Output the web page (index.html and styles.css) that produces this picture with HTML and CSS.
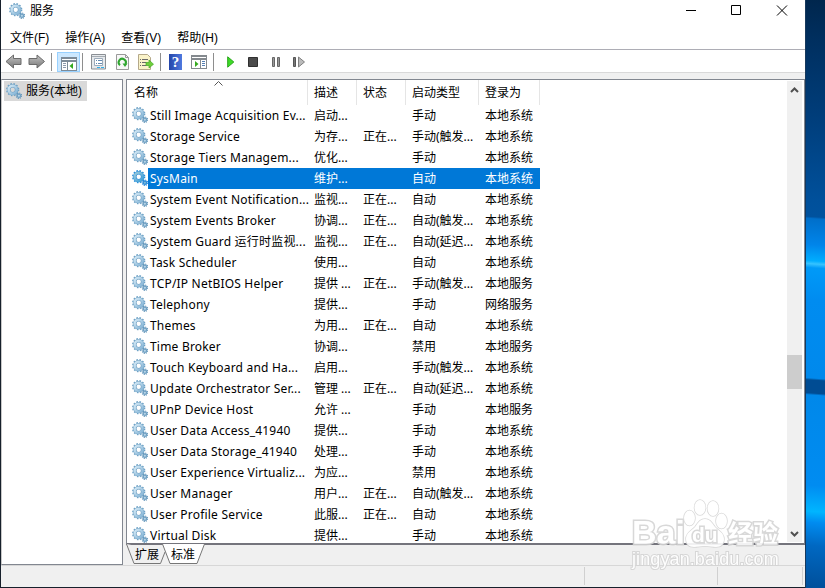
FILE: index.html
```
<!DOCTYPE html>
<html lang="zh-CN">

<head>
    <meta charset="UTF-8">
    <title>服务</title>
    <link rel="stylesheet" href="styles.css">
</head>

<body>
    <svg class="defs" width="0" height="0">
        <linearGradient id="metal" x1="0" y1="0" x2="1" y2="1">
            <stop offset="0" stop-color="#d3e9f6" />
            <stop offset="1" stop-color="#84b4d6" />
        </linearGradient>
        <linearGradient id="grey" x1="0" y1="0" x2="0" y2="1">
            <stop offset="0" stop-color="#c4c4c4" />
            <stop offset="1" stop-color="#777" />
        </linearGradient>
        <symbol id="gear" viewBox="0 0 16 16">
            <circle cx="6.7" cy="6.7" r="5.9" fill="none" stroke="#6ea3c7" stroke-width="1.5" stroke-dasharray="1.6 1.49" />
            <circle cx="6.7" cy="6.7" r="3.9" fill="none" stroke="#6f9fc1" stroke-width="3.4" />
            <circle cx="6.7" cy="6.7" r="4" fill="none" stroke="url(#metal)" stroke-width="2.500" />
            <circle cx="12.9" cy="12.7" r="2.7" fill="none" stroke="#5c90b6" stroke-width="1.1" stroke-dasharray="1.1 1.02" />
            <circle cx="12.9" cy="12.7" r="1.7" fill="#b9d6e9" stroke="#6fa0c3" stroke-width="1.3" />
        </symbol>
    </svg>

    <div class="window">
        <div class="titlebar">
            <svg class="gear"><use href="#gear" /></svg>
            <span class="title">服务</span>
            <svg class="controls" width="104" height="12" viewBox="0 0 104 12">
                <path d="M1 5.500h10M46.500 .5h9v9h-9z M92 .5l10 10M102 .5l-10 10" fill="none" stroke="#000" />
            </svg>
        </div>

        <div class="menubar">
            <span>文件(F)</span>
            <span>操作(A)</span>
            <span>查看(V)</span>
            <span>帮助(H)</span>
        </div>

        <div class="toolbar">
            <svg class="back" width="18" height="16" viewBox="0 0 18 16">
                <path d="M1 7.500 8.500 1v3.500h7.500v6H8.500V14z" fill="url(#grey)" stroke="#6b6b6b" />
            </svg>
            <svg class="forward" width="18" height="16" viewBox="0 0 18 16">
                <path d="M16.500 7.500 9 1v3.500H1v6h8V14z" fill="url(#grey)" stroke="#6b6b6b" />
            </svg>
            <i class="sep"></i>
            <span class="pressed">
                <svg width="16" height="14" viewBox="0 0 16 14">
                    <path d="M0 0h16v14H0z" fill="#7d8b98" />
                    <path d="M1 2h14v1H1zM1 5h5v8H1zM7 5h8v8H7z" fill="#fff" />
                    <path d="M2 6.500h3M2 8.500h3M2 10.500h3" stroke="#8c9aac" />
                    <path d="M12 6v6L8.500 9z" fill="#35a91f" />
                </svg>
            </span>
            <i class="sep sep-short"></i>
            <svg class="props" width="15" height="16" viewBox="0 0 15 16">
                <path d="M.5.5h14v14.500H.5z" fill="#e6e9ec" stroke="#8a8f94" />
                <path d="M1 2.500h13" stroke="#a5acb2" />
                <path d="M3.500 4.500h8v7h-8z" fill="#fff" stroke="#9cabba" />
                <path d="M5 6.500h1m1 0h4M5 9.500h1m1 0h4" stroke="#6389b1" />
                <path d="M6 13.500h3m1 0h3" stroke="#31aee8" />
            </svg>
            <svg class="refresh" width="13" height="16" viewBox="0 0 13 16">
                <path d="M.5.5h9l3 3v12H.5z" fill="#f7f7f7" stroke="#9a9a9a" />
                <path d="M9.500 .5v3h3" fill="none" stroke="#9a9a9a" />
                <path d="M4 11.200A3.600 3.600 0 1 1 9.500 10" fill="none" stroke="#2fa52f" stroke-width="2" />
                <path d="M6.500 9.500h5l-2.500 3.500z" fill="#2fa52f" />
            </svg>
            <svg class="export" width="16" height="16" viewBox="0 0 16 16">
                <path d="M.5.5h9l3 3v12H.5z" fill="#faf3c9" stroke="#b5a98a" />
                <path d="M2 5.500h1m1 0h6M2 8.500h1m1 0h4M2 11.500h1m1 0h4" stroke="#6a6a6a" />
                <path d="M8 8.500h3V6l4.500 4.200L11 14v-2.500H8z" fill="#6fce3c" stroke="#43a823" stroke-width=".7" />
            </svg>
            <i class="sep sep-mid"></i>
            <span class="help">?</span>
            <svg class="panel" width="16" height="14" viewBox="0 0 16 14">
                <path d="M0 0h16v14H0z" fill="#84898e" />
                <path d="M1 2h14v1H1zM1 5h8v8H1zM10 5h5v8h-5z" fill="#fff" />
                <path d="M11 6.500h3M11 8.500h3M11 10.500h3" stroke="#557fb3" />
                <path d="M4 6v6l3.500-3z" fill="#35a91f" />
            </svg>
            <i class="sep sep-last"></i>
            <svg class="play" width="8" height="12" viewBox="0 0 8 12">
                <path d="M.7.8 6.800 6 .7 11.200z" fill="#3ddb27" stroke="#2ca51d" />
            </svg>
            <svg class="stop" width="10" height="10" viewBox="0 0 10 10">
                <path d="M.5.5h9v9h-9z" fill="#4b4b4b" stroke="#303030" />
            </svg>
            <svg class="pause" width="8" height="10" viewBox="0 0 8 10">
                <path d="M.5.5h2v9h-2zM5.500.5h2v9h-2z" fill="#999" stroke="#666" />
            </svg>
            <svg class="restart" width="13" height="12" viewBox="0 0 13 12">
                <path d="M.5 1.500h2v9h-2z" fill="#777" stroke="#555" />
                <path d="M5.500 1 11.500 6l-6 5z" fill="#bbb" stroke="#808080" />
            </svg>
        </div>

        <div class="content">
            <div class="tree">
                <div class="node">
                    <svg class="gear"><use href="#gear" /></svg>
                    <span>服务(本地)</span>
                </div>
            </div>

            <div class="right">
                <div class="list">
                    <div class="table">
                        <div class="head">
                            <span class="sorted">名称
                                <svg class="sort" width="9" height="5" viewBox="0 0 9 5"><path d="M.5 4.500l4-4 4 4" fill="none" stroke="#555" /></svg>
                            </span>
                            <span>描述</span>
                            <span>状态</span>
                            <span>启动类型</span>
                            <span>登录为</span>
                        </div>
                        <div id="rows"></div>
                    </div>
                    <div class="scrollbar">
                        <svg width="9" height="6" viewBox="0 0 9 6"><path d="M1 5l3.500-3.500L8 5" fill="none" stroke="#505050" stroke-width="2" /></svg>
                        <div class="thumb"></div>
                        <svg width="9" height="6" viewBox="0 0 9 6"><path d="M1 1l3.500 3.500L8 1" fill="none" stroke="#505050" stroke-width="2" /></svg>
                    </div>
                </div>
                <div class="tabs">
                    <svg class="tab-shape" width="80" height="21" viewBox="0 0 80 21">
                        <path d="M.5 0l7.500 19.500h26.500L39 8" fill="#f0f0f0" stroke="#777" />
                        <path d="M36.500 0l7.500 19.500h27L78.500 0z" fill="#fff" />
                        <path d="M36.500 0l7.500 19.500h27L78.500 0" fill="none" stroke="#777" />
                    </svg>
                    <span>扩展</span>
                    <span>标准</span>
                </div>
            </div>
        </div>

        <div class="statusbar">
            <span></span>
            <span></span>
            <span></span>
        </div>
    </div>

    <div class="desktop"></div>

    <div class="watermark">
        <div class="brand">
            <span class="bai">Bai</span>
            <span class="paw">
                <svg width="46" height="49" viewBox="0 0 46 49">
                    <g fill="#fff" stroke="#d4d4d4" stroke-width="1.500">
                        <ellipse cx="6.500" cy="19" rx="5.500" ry="7.500" />
                        <ellipse cx="17" cy="8.500" rx="5.500" ry="7.500" />
                        <ellipse cx="30" cy="9.500" rx="5.500" ry="7.500" />
                        <ellipse cx="38.500" cy="22" rx="5.500" ry="7.500" />
                        <path d="M22 20c-5 0-7 4-10 8-4 4-9 6-9 12 0 5 3 8 8 8 4 0 7-1 11-1s7 1 11 1c5 0 8-3 8-8 0-6-5-8-9-12-3-4-5-8-10-8z" />
                    </g>
                </svg>
                <b>du</b>
            </span>
            <span class="jingyan">经验</span>
        </div>
        <div class="url">jingyan.baidu.com</div>
    </div>

    <script>
        const services = [
            ['Still Image Acquisition Ev...', '启动...', '', '手动', '本地系统'],
            ['Storage Service', '为存...', '正在...', '手动(触发...', '本地系统'],
            ['Storage Tiers Managem...', '优化...', '', '手动', '本地系统'],
            ['SysMain', '维护...', '', '自动', '本地系统'],
            ['System Event Notification...', '监视...', '正在...', '自动', '本地系统'],
            ['System Events Broker', '协调...', '正在...', '自动(触发...', '本地系统'],
            ['System Guard 运行时监视...', '监视...', '正在...', '自动(延迟...', '本地系统'],
            ['Task Scheduler', '使用...', '', '自动', '本地系统'],
            ['TCP/IP NetBIOS Helper', '提供 ...', '正在...', '手动(触发...', '本地服务'],
            ['Telephony', '提供...', '', '手动', '网络服务'],
            ['Themes', '为用...', '正在...', '自动', '本地系统'],
            ['Time Broker', '协调...', '', '禁用', '本地服务'],
            ['Touch Keyboard and Ha...', '启用...', '', '手动(触发...', '本地系统'],
            ['Update Orchestrator Ser...', '管理 ...', '正在...', '自动(延迟...', '本地系统'],
            ['UPnP Device Host', '允许 ...', '', '手动', '本地服务'],
            ['User Data Access_41940', '提供...', '', '手动', '本地系统'],
            ['User Data Storage_41940', '处理...', '', '手动', '本地系统'],
            ['User Experience Virtualiz...', '为应...', '', '禁用', '本地系统'],
            ['User Manager', '用户...', '正在...', '自动(触发...', '本地系统'],
            ['User Profile Service', '此服...', '正在...', '自动', '本地系统'],
            ['Virtual Disk', '提供...', '', '手动', '本地系统']
        ];

        const rows = document.getElementById('rows');

        services.forEach(function (service) {
            const row = document.createElement('div');
            row.className = service[0] === 'SysMain' ? 'row selected' : 'row';
            row.innerHTML = '<svg class="gear"><use href="#gear" /></svg>' +
                service.map(function (text) {
                    return '<span>' + text + '</span>';
                }).join('');
            rows.appendChild(row);
        });
    </script>
</body>

</html>
```
FILE: styles.css
```
* {
    box-sizing: border-box;
}

body {
    margin: 0;
    width: 825px;
    height: 588px;
    display: flex;
    overflow: hidden;
    position: relative;
    background: #17202b;
    color: #000;
    font-family: "Noto Sans", "Noto Sans CJK SC", sans-serif;
    font-size: 12px;
    line-height: 21px;
}

svg {
    display: block;
    flex: none;
}

.defs {
    position: absolute;
}

.gear {
    width: 16px;
    height: 16px;
}

.window {
    width: 804px;
    height: 587px;
    margin-left: 1px;
    display: flex;
    flex-direction: column;
    background: #f0f0f0;
}

.titlebar {
    height: 26px;
    padding: 0 16px 5px 8px;
    display: flex;
    align-items: center;
    background: #fff;
}

.title {
    margin-left: 5px;
}

.controls {
    margin-left: auto;
}

.menubar {
    height: 24px;
    padding: 2px 9px 0;
    display: flex;
    gap: 16px;
    background: #fff;
    border-bottom: 1px solid #adadb5;
    font-family: "Liberation Sans", "Noto Sans CJK SC", sans-serif;
}

.toolbar {
    height: 23px;
    padding: 2px 0 0 4px;
    display: flex;
    align-items: center;
    background: #fff;
    border-bottom: 1px solid #d9d9d9;
}

.forward {
    margin-left: 5px;
}

.sep {
    width: 1px;
    height: 18px;
    margin-left: 5px;
    background: #8e8e8e;
}

.pressed {
    width: 23px;
    height: 20px;
    margin-left: 5px;
    padding: 4px 0 0 3px;
    background: #cce8ff;
    border: 1px solid #99d1ff;
}

.sep-short {
    margin-left: 2px;
}

.props {
    margin-left: 8px;
}

.refresh {
    margin-left: 10px;
}

.export {
    margin-left: 9px;
}

.sep-mid {
    margin-left: 6px;
}

.help {
    width: 13px;
    height: 16px;
    margin-left: 8px;
    background: linear-gradient(90deg, #2445a9, #4f79df);
    color: #fff;
    font: bold 15px/16px "Liberation Serif", serif;
    text-align: center;
}

.panel {
    margin-left: 9px;
}

.sep-last {
    margin-left: 6px;
}

.play {
    margin-left: 13px;
}

.stop {
    margin-left: 13px;
}

.pause {
    margin-left: 14px;
}

.restart {
    margin-left: 13px;
}

.content {
    height: 492px;
    padding-top: 6px;
    display: flex;
    gap: 3px;
}

.tree {
    width: 122px;
    background: #fff;
    border: 1px solid #828790;
    border-left-color: #c8c8c8;
    padding: 1px 2px;
}

.node {
    width: 83px;
    height: 20px;
    padding-left: 2px;
    display: flex;
    align-items: center;
    gap: 4px;
    background: #d9d9d9;
    font-family: "Liberation Sans", "Noto Sans CJK SC", sans-serif;
}

.right {
    flex: 1;
}

.list {
    height: 466px;
    display: flex;
    justify-content: space-between;
    overflow: hidden;
    background: #fff;
    border: 1px solid #828790;
    border-bottom: 2px solid #74747c;
}

.table {
    width: 413px;
}

.head,
.row {
    display: grid;
    grid-template-columns: 181px 49px 49px 73px 61px;
    white-space: nowrap;
}

.head {
    height: 25px;
    line-height: 25px;
}

.head span {
    padding-left: 6px;
    border-right: 1px solid #e5e5e5;
}

.head .sorted {
    position: relative;
    padding-left: 7px;
}

.sort {
    position: absolute;
    left: 87px;
    top: 1px;
}

.row {
    height: 21px;
    grid-template-columns: 21px 160px 49px 49px 73px 61px;
}

.row .gear {
    margin: 2px 0 0 5px;
}

.row span {
    height: 21px;
    padding: 1px 0 0 6px;
    line-height: 20px;
}

.row .gear + span {
    padding-left: 2px;
    letter-spacing: 0.2px;
}

.selected span {
    background: #0078d7;
    color: #fff;
}

.selected .gear {
    filter: saturate(3) hue-rotate(12deg) brightness(0.85);
}

.scrollbar {
    width: 15px;
    margin: 1px 2px 1px 0;
    padding: 6px 0 5px;
    display: flex;
    flex-direction: column;
    align-items: center;
    background: #f0f0f0;
}

.thumb {
    width: 15px;
    height: 34px;
    margin: 262px 0 auto;
    background: #cdcdcd;
}

.tabs {
    height: 20px;
    display: flex;
    gap: 12px;
    padding-left: 9px;
    position: relative;
    line-height: 19px;
}

.tabs span {
    position: relative;
}

.tab-shape {
    position: absolute;
    left: 0;
    top: -1px;
}

.statusbar {
    height: 22px;
    padding-bottom: 2px;
    display: grid;
    grid-template-columns: 584px 133px 85px;
    border-top: 1px solid #d7d7d7;
}

.statusbar span {
    margin-top: 1px;
    border-right: 1px solid #d0d0d0;
}

.desktop {
    width: 20px;
    height: 588px;
    border-left: 1px solid #17395c;
    background: linear-gradient(184deg, #00264d 0, #002f5f 40px, #003c78 110px, #00509b 200px, #00529e 217px, #006fca 219px, #0085ea 245px, #00adff 261px, #36c3ff 264px, #009af8 268px, #008cf0 300px, #0089ec 378px, #004c93 380px, #004c93 393px, #0088ea 395px, #008cf1 485px, #00b5ff 511px, #008cf0 522px, #0068c2 545px, #004f9a 588px);
}

.watermark {
    position: absolute;
    left: 632px;
    top: 499px;
    width: 150px;
    color: #fff;
    opacity: 0.9;
    -webkit-text-stroke: 3px #d4d4d4;
    paint-order: stroke fill;
}

.brand {
    height: 49px;
    display: flex;
    align-items: flex-end;
    font-family: "Liberation Sans", "Noto Sans CJK SC", sans-serif;
    font-weight: bold;
}

.bai {
    width: 51px;
    font-size: 34px;
    line-height: 32px;
}

.paw {
    width: 45px;
    height: 49px;
    position: relative;
}

.paw b {
    position: absolute;
    left: 9px;
    top: 24px;
    font-size: 21px;
    line-height: 24px;
}

.jingyan {
    font-size: 25px;
    line-height: 28px;
}

.url {
    font: 18px/22px "Liberation Sans", sans-serif;
    letter-spacing: 0.1px;
    white-space: nowrap;
    -webkit-text-stroke-width: 2px;
}
```
